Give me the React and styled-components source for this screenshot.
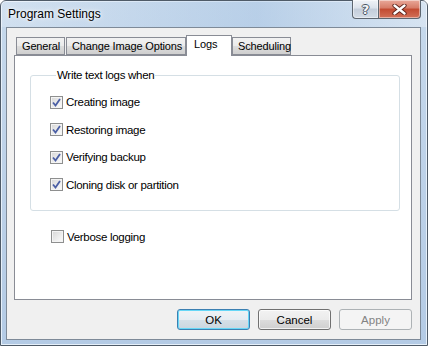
import React from "react";
import styled, { createGlobalStyle } from "styled-components";

const Global = createGlobalStyle`
  html, body { margin: 0; padding: 0; background: #fff; }
  body { font-family: "Liberation Sans", Arial, sans-serif; font-size: 11.5px; letter-spacing: -0.3px; color: #000; }
`;

const Window = styled.div`
  box-sizing: border-box;
  width: 428px;
  height: 346px;
  border: 1px solid #4f5b68;
  border-radius: 6px 6px 0 0;
  background: linear-gradient(to bottom, #c6d9ec 0%, #bfd3e9 40%, #b4cbe5 100%);
  display: flex;
  flex-direction: column;
  box-shadow: inset 0 0 0 1px #e6f0fa;
`;

const TitleBar = styled.div`
  height: 26px;
  flex: none;
  display: flex;
  align-items: flex-start;
  padding-left: 7px;
  background: linear-gradient(to right, rgba(255,255,255,0.2), rgba(160,190,225,0.35) 60%, rgba(255,255,255,0.3));
`;

const Title = styled.div`
  margin-top: 6px;
  font-size: 12px;
  letter-spacing: 0;
  color: #000;
  text-shadow: 0 0 6px #fff, 0 0 3px #fff;
`;

const Caption = styled.div`
  margin-left: auto;
  margin-right: 6px;
  margin-top: -1px;
  display: flex;
`;

const CapButton = styled.div`
  box-sizing: border-box;
  width: ${p => p.$w}px;
  height: 19px;
  display: flex;
  align-items: center;
  justify-content: center;
  border: 1px solid #5d6670;
  border-top: none;
  ${p => p.$first ? "border-radius: 0 0 0 4px; border-right: none;" : "border-radius: 0 0 4px 0;"}
  background: ${p => p.$red
    ? "linear-gradient(to bottom, #e9a99a 0%, #d67b67 45%, #c24a31 50%, #d27058 100%)"
    : "linear-gradient(to bottom, #f0f3f7 0%, #dbe2eb 45%, #c3cdda 50%, #d3dce7 100%)"};
  box-shadow: inset 0 0 0 1px rgba(255,255,255,0.45);
`;

const HelpGlyph = styled.span`
  font-family: "DejaVu Sans", sans-serif;
  font-size: 13px;
  font-weight: bold;
  color: #f4f6f9;
  letter-spacing: 0;
  text-shadow: 1px 0 0 #4a5563, -1px 0 0 #4a5563, 0 1px 0 #4a5563, 0 -1px 0 #4a5563;
`;

const Client = styled.div`
  flex: 1;
  margin: 0 6px 5px 5px;
  border: 1px solid #7e8a98;
  background: #f0f0f0;
  display: flex;
  flex-direction: column;
  padding: 7px 8px 0 7px;
`;

const TabStrip = styled.div`
  height: 20px;
  display: flex;
  align-items: flex-end;
  padding-left: 2px;
  position: relative;
  z-index: 1;
`;

const Tab = styled.div`
  box-sizing: border-box;
  flex: none;
  width: ${p => p.$w}px;
  height: ${p => p.$active ? 21 : 18}px;
  margin-left: ${p => p.$ml || 0}px;
  margin-bottom: ${p => p.$active ? -1 : 0}px;
  padding: ${p => p.$active ? "2px 0 0 7px" : "2px 0 0 5px"};
  font-size: 11px;
  letter-spacing: -0.15px;
  border: 1px solid #898c95;
  border-bottom: ${p => p.$active ? "none" : "1px solid #898c95"};
  background: ${p => p.$active ? "#fff" : "linear-gradient(to bottom, #f2f2f2 0%, #ebebeb 50%, #dddddd 51%, #cfcfcf 100%)"};
  white-space: nowrap;
`;

const Panel = styled.div`
  box-sizing: border-box;
  height: 245px;
  border: 1px solid #898c95;
  background: #fff;
  padding: 12px 11px 0 15px;
  display: flex;
  flex-direction: column;
`;

const Group = styled.fieldset`
  margin: 0;
  padding: 13px 10px 18px 19px;
  border: 1px solid #d5dfe5;
  border-radius: 3px;
  display: flex;
  flex-direction: column;
  gap: 13.5px;
`;

const Legend = styled.legend`
  padding: 0 1px;
  margin-left: 6px;
  line-height: 14px;
`;

const Row = styled.label`
  display: flex;
  align-items: center;
  gap: 3px;
  height: 14px;
  margin: ${p => p.$m || "0"};
`;

const Box = styled.span`
  box-sizing: border-box;
  width: 13px;
  height: 13px;
  border: 1px solid #8e8f8f;
  background: linear-gradient(135deg, #d6d6d6 0%, #f2f2f2 70%, #fbfbfb 100%);
  box-shadow: inset 0 0 0 1px #f4f4f4;
  display: flex;
  align-items: center;
  justify-content: center;
  flex: none;
`;

const Buttons = styled.div`
  margin-top: 9px;
  display: flex;
  justify-content: flex-end;
  gap: 8px;
`;

const Button = styled.div`
  box-sizing: border-box;
  width: 73px;
  height: 21px;
  border: 1px solid ${p => p.$disabled ? "#adb2b5" : p.$default ? "#3c7fb1" : "#707070"};
  border-radius: 3px;
  display: flex;
  align-items: center;
  justify-content: center;
  letter-spacing: 0;
  color: ${p => p.$disabled ? "#838383" : "#000"};
  background: ${p => p.$disabled ? "#f4f4f4" : p.$default
    ? "linear-gradient(to bottom, #eef3f6 0%, #e6edf2 50%, #d5e0e8 51%, #cad6df 100%)"
    : "linear-gradient(to bottom, #f2f2f2 0%, #ebebeb 50%, #dddddd 51%, #cfcfcf 100%)"};
  box-shadow: ${p => p.$default ? "inset 0 0 0 1px #66d7f7" : p.$disabled ? "none" : "inset 0 0 0 1px rgba(255,255,255,0.7)"};
`;

function Check({ checked }) {
  return (
    <Box>
      {checked && (
        <svg width="9" height="9" viewBox="0 0 9 9">
          <path d="M1 4.5 L3.5 7.5 L8 1" fill="none" stroke="#4b5fa5" strokeWidth="1.8" strokeLinejoin="miter" />
        </svg>
      )}
    </Box>
  );
}

function Item({ checked, children, m }) {
  return (
    <Row $m={m}>
      <Check checked={checked} />
      <span>{children}</span>
    </Row>
  );
}

export default function App() {
  return (
    <>
      <Global />
      <Window>
        <TitleBar>
          <Title>Program Settings</Title>
          <Caption>
            <CapButton $w={26} $first>
              <HelpGlyph>?</HelpGlyph>
            </CapButton>
            <CapButton $w={43} $red>
              <svg width="15" height="11" viewBox="0 0 15 11">
                <path d="M2.5 1.5 L12.5 9.5 M12.5 1.5 L2.5 9.5" stroke="#5a2018" strokeWidth="4.2" strokeLinecap="round" />
                <path d="M2.5 1.5 L12.5 9.5 M12.5 1.5 L2.5 9.5" stroke="#fff" strokeWidth="2.4" strokeLinecap="round" />
              </svg>
            </CapButton>
          </Caption>
        </TitleBar>
        <Client>
          <TabStrip>
            <Tab $w={49}>General</Tab>
            <Tab $w={120} $ml={1}>Change Image Options</Tab>
            <Tab $w={46} $active>Logs</Tab>
            <Tab $w={59}>Scheduling</Tab>
          </TabStrip>
          <Panel>
            <Group>
              <Legend>Write text logs when</Legend>
              <Item checked>Creating image</Item>
              <Item checked>Restoring image</Item>
              <Item checked>Verifying backup</Item>
              <Item checked>Cloning disk or partition</Item>
            </Group>
            <Item m="19px 0 0 21px">Verbose logging</Item>
          </Panel>
          <Buttons>
            <Button $default>OK</Button>
            <Button>Cancel</Button>
            <Button $disabled>Apply</Button>
          </Buttons>
        </Client>
      </Window>
    </>
  );
}
